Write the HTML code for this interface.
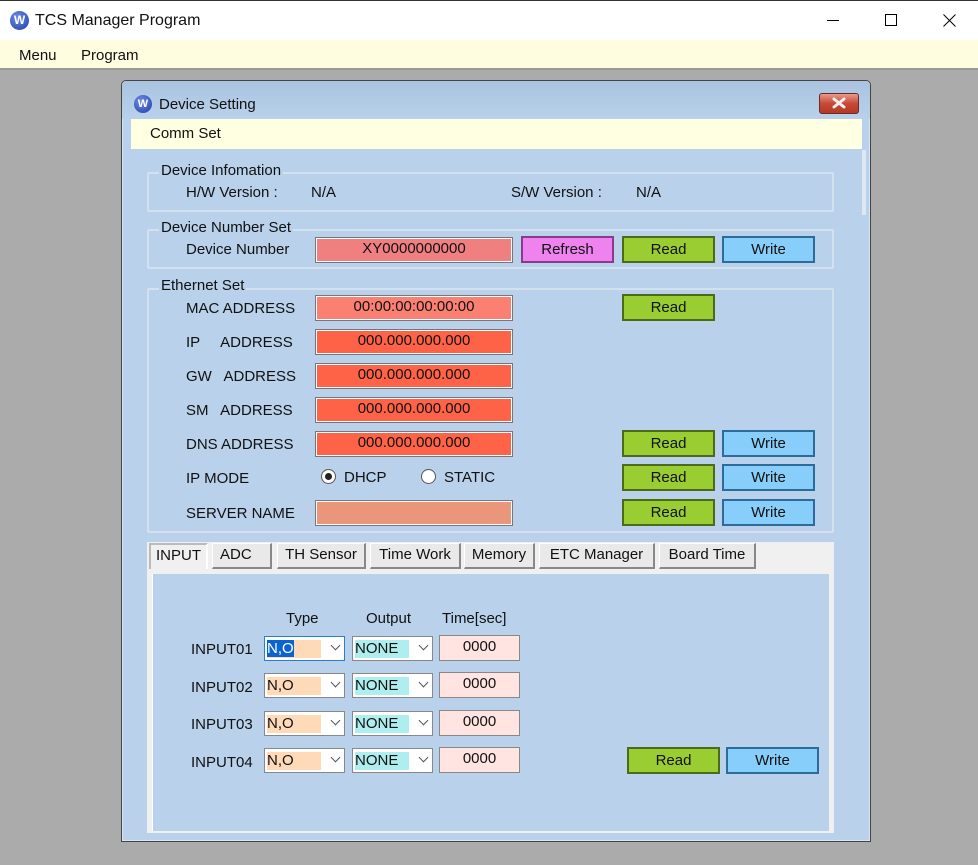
<!DOCTYPE html>
<html><head><meta charset="utf-8"><style>
*{box-sizing:border-box;margin:0;padding:0}
body{width:978px;height:865px;position:relative;overflow:hidden;background:#ababab;font-family:"Liberation Sans","Noto Sans CJK KR",sans-serif;font-size:15px;color:#111}
.a{position:absolute}
.t{position:absolute;white-space:nowrap;line-height:18px;margin-top:1px}
.grp{position:absolute;border:2px solid #d3e0ee;border-radius:2px}
.gl{position:absolute;background:#b9d1ea;padding:0 2px;line-height:16px;white-space:nowrap;margin-top:1px}
.fld{position:absolute;border:1px solid #777;box-shadow:inset 0 0 0 1px #fff;text-align:center;line-height:22px;height:26px;width:198px}
.btn{position:absolute;width:93px;height:27px;text-align:center;line-height:24px;border:2px solid}
.rd{background:#9acd32;border-color:#4d6a1a}
.wr{background:#87cefa;border-color:#2d6c9a}
.tab{position:absolute;top:543px;height:26px;background:#e9e9e9;border:1px solid #fff;border-right:2px solid #888;border-bottom:2px solid #888;line-height:22px;text-align:center}
.cb{position:absolute;width:81px;height:25px;background:#fff;border:1px solid #888}
.cb span{position:absolute;left:2px;top:3px;height:18px;width:54px;line-height:18px}
.cb i{position:absolute;right:5px;top:5px;width:7px;height:7px;border-right:1px solid #555;border-bottom:1px solid #555;transform:rotate(45deg)}
.tm{position:absolute;width:81px;height:26px;background:#ffe4e1;border:1px solid #888;text-align:center;line-height:22px}
.rad{position:absolute;width:15px;height:15px;border-radius:50%;background:#fff;border:1px solid #555}
</style></head><body>
<div class="a" style="left:0;top:0;width:978px;height:40px;background:#fff;border-top:1px solid #333"></div>
<div class="a" style="left:10px;top:11px;width:19px;height:19px;border-radius:50%;background:radial-gradient(circle at 40% 35%,#6f8fe8,#1d3aa8);color:#fff;font-weight:bold;font-size:12px;text-align:center;line-height:19px">W</div>
<div class="t" style="left:35px;top:11px;font-size:16px">TCS Manager Program</div>
<div class="a" style="left:827px;top:20px;width:12px;height:1px;background:#000"></div>
<div class="a" style="left:885px;top:14px;width:12px;height:12px;border:1px solid #000"></div>
<svg class="a" style="left:943px;top:14px" width="13" height="13"><path d="M0.5 0.5L12.5 12.5M12.5 0.5L0.5 12.5" stroke="#000" stroke-width="1"/></svg>
<div class="a" style="left:0;top:40px;width:978px;height:30px;background:#fffde0;border-bottom:2px solid #999"></div>
<div class="t" style="left:19px;top:46px">Menu</div>
<div class="t" style="left:81px;top:46px">Program</div>

<div class="a" style="left:121px;top:80px;width:750px;height:762px;background:#b9d1ea;border:1px solid #444;border-radius:5px 5px 0 0;box-shadow:inset 0 0 0 1px #d7e5f4"></div>
<div class="a" style="left:122px;top:81px;width:748px;height:38px;background:linear-gradient(#a9c3e0,#b9d1ea);border-radius:5px 5px 0 0"></div>
<div class="a" style="left:134px;top:95px;width:18px;height:18px;border-radius:50%;background:radial-gradient(circle at 40% 35%,#6f8fe8,#1d3aa8);color:#fff;font-weight:bold;font-size:11px;text-align:center;line-height:18px">W</div>
<div class="t" style="left:159px;top:95px">Device Setting</div>
<div class="a" style="left:819px;top:93px;width:40px;height:21px;border:1px solid #6b2a2a;border-radius:3px;background:linear-gradient(#e79b8b,#c64a35 50%,#b23a25)"></div>
<svg class="a" style="left:832px;top:97px" width="14" height="12"><path d="M2 2L12 10M12 2L2 10" stroke="#eee" stroke-width="3" stroke-linecap="round"/></svg>
<div class="a" style="left:131px;top:119px;width:731px;height:30px;background:#ffffe1"></div>
<div class="t" style="left:150px;top:124px">Comm Set</div>
<div class="a" style="left:862px;top:150px;width:4px;height:65px;background:#dde8f4"></div>

<div class="grp" style="left:147px;top:172px;width:687px;height:40px"></div>
<div class="gl" style="left:159px;top:162px">Device Infomation</div>
<div class="t" style="left:186px;top:183px">H/W Version :</div>
<div class="t" style="left:311px;top:183px">N/A</div>
<div class="t" style="left:511px;top:183px">S/W Version :</div>
<div class="t" style="left:636px;top:183px">N/A</div>

<div class="grp" style="left:147px;top:229px;width:687px;height:40px"></div>
<div class="gl" style="left:159px;top:219px">Device Number Set</div>
<div class="t" style="left:186px;top:240px">Device Number</div>
<div class="fld" style="left:315px;top:237px;background:#f08080">XY0000000000</div>
<div class="btn" style="left:521px;top:236px;background:#ee82ee;border-color:#8a3a8a">Refresh</div>
<div class="btn rd" style="left:622px;top:236px">Read</div>
<div class="btn wr" style="left:722px;top:236px">Write</div>

<div class="grp" style="left:147px;top:288px;width:687px;height:245px"></div>
<div class="gl" style="left:159px;top:277px">Ethernet Set</div>
<div class="t" style="left:186px;top:299px">MAC ADDRESS</div>
<div class="fld" style="left:315px;top:295px;background:#fa8072">00:00:00:00:00:00</div>
<div class="btn rd" style="left:622px;top:294px">Read</div>
<div class="t" style="left:186px;top:333px">IP&nbsp;&nbsp;&nbsp;&nbsp; ADDRESS</div>
<div class="fld" style="left:315px;top:329px;background:#ff6347">000.000.000.000</div>
<div class="t" style="left:186px;top:367px">GW&nbsp;&nbsp; ADDRESS</div>
<div class="fld" style="left:315px;top:363px;background:#ff6347">000.000.000.000</div>
<div class="t" style="left:186px;top:401px">SM&nbsp;&nbsp; ADDRESS</div>
<div class="fld" style="left:315px;top:397px;background:#ff6347">000.000.000.000</div>
<div class="t" style="left:186px;top:435px">DNS ADDRESS</div>
<div class="fld" style="left:315px;top:431px;background:#ff6347">000.000.000.000</div>
<div class="btn rd" style="left:622px;top:430px">Read</div>
<div class="btn wr" style="left:722px;top:430px">Write</div>
<div class="t" style="left:186px;top:469px">IP MODE</div>
<div class="rad" style="left:321px;top:469px"><div class="a" style="left:3px;top:3px;width:7px;height:7px;border-radius:50%;background:#222"></div></div>
<div class="t" style="left:344px;top:468px">DHCP</div>
<div class="rad" style="left:421px;top:469px"></div>
<div class="t" style="left:444px;top:468px">STATIC</div>
<div class="btn rd" style="left:622px;top:464px">Read</div>
<div class="btn wr" style="left:722px;top:464px">Write</div>
<div class="t" style="left:186px;top:504px">SERVER NAME</div>
<div class="fld" style="left:315px;top:500px;background:#e9967a"></div>
<div class="btn rd" style="left:622px;top:499px">Read</div>
<div class="btn wr" style="left:722px;top:499px">Write</div>

<div class="a" style="left:147px;top:542px;width:687px;height:291px;background:#f0f0f0"></div>
<div class="a" style="left:152px;top:574px;width:677px;height:257px;background:#b9d1ea;border-left:1px solid #fff"></div>
<div class="tab" style="left:149px;width:59px;background:#f0f0f0;border:2px solid #bbb;border-right-color:#fff;border-bottom:none">INPUT</div>
<div class="tab" style="left:212px;width:60px;text-align:left;padding-left:7px">ADC</div>
<div class="tab" style="left:277px;width:89px">TH Sensor</div>
<div class="tab" style="left:370px;width:91px">Time Work</div>
<div class="tab" style="left:464px;width:71px">Memory</div>
<div class="tab" style="left:539px;width:116px">ETC Manager</div>
<div class="tab" style="left:659px;width:97px">Board Time</div>

<div class="t" style="left:286px;top:609px">Type</div>
<div class="t" style="left:366px;top:609px">Output</div>
<div class="t" style="left:442px;top:609px">Time[sec]</div>

<div class="t" style="left:191px;top:640px">INPUT01</div>
<div class="cb" style="left:264px;top:636px;border-color:#2a7ad6"><span style="background:#ffdab9"><b style="font-weight:normal;background:#0a64d0;color:#fff">N,O</b></span><i></i></div>
<div class="cb" style="left:352px;top:636px"><span style="background:#afeeee">NONE</span><i></i></div>
<div class="tm" style="left:439px;top:635px">0000</div>
<div class="t" style="left:191px;top:678px">INPUT02</div>
<div class="cb" style="left:264px;top:673px"><span style="background:#ffdab9">N,O</span><i></i></div>
<div class="cb" style="left:352px;top:673px"><span style="background:#afeeee">NONE</span><i></i></div>
<div class="tm" style="left:439px;top:672px">0000</div>
<div class="t" style="left:191px;top:715px">INPUT03</div>
<div class="cb" style="left:264px;top:711px"><span style="background:#ffdab9">N,O</span><i></i></div>
<div class="cb" style="left:352px;top:711px"><span style="background:#afeeee">NONE</span><i></i></div>
<div class="tm" style="left:439px;top:710px">0000</div>
<div class="t" style="left:191px;top:753px">INPUT04</div>
<div class="cb" style="left:264px;top:748px"><span style="background:#ffdab9">N,O</span><i></i></div>
<div class="cb" style="left:352px;top:748px"><span style="background:#afeeee">NONE</span><i></i></div>
<div class="tm" style="left:439px;top:747px">0000</div>
<div class="btn rd" style="left:627px;top:747px">Read</div>
<div class="btn wr" style="left:726px;top:747px">Write</div>
</body></html>
